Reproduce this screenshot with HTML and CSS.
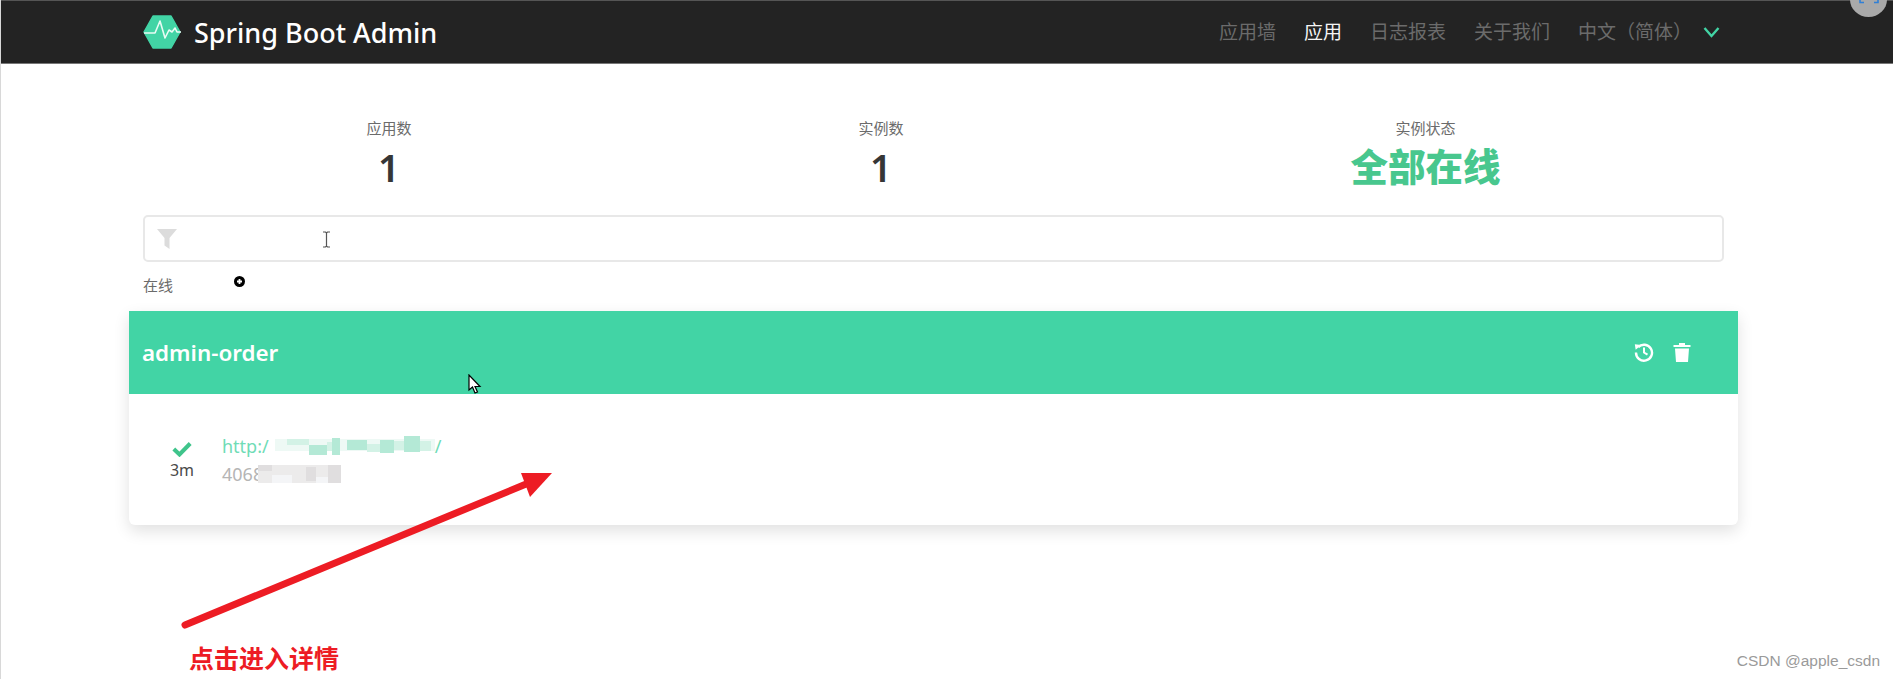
FILE: index.html
```html
<!DOCTYPE html>
<html lang="zh">
<head>
<meta charset="utf-8">
<title>Spring Boot Admin</title>
<link rel="stylesheet" href="styles.css">
</head>
<body>
<header class="navbar">
  <div class="brand">
    <svg class="logo" width="38" height="34" viewBox="0 0 38 34">
      <path d="M10 1h18l9 16-9 16H10L1 17z" fill="#42d4a5" stroke="#42d4a5" stroke-width="1.5" stroke-linejoin="round"/>
      <path d="M1 18h11l5-12 5 17 4-8 3 2 3-4 2 4h7" fill="none" stroke="#e8fbf4" stroke-width="1.6" stroke-linejoin="round"/>
    </svg>
    <span class="brand-name">Spring Boot Admin</span>
  </div>
  <nav class="nav">
    <a class="nav-item">应用墙</a>
    <a class="nav-item active">应用</a>
    <a class="nav-item">日志报表</a>
    <a class="nav-item">关于我们</a>
    <a class="nav-item">中文（简体）</a>
    <svg class="chevron" width="17" height="12" viewBox="0 0 17 12"><path d="M1.500 2l7 8 7-8" fill="none" stroke="#42d4a5" stroke-width="2.400"/></svg>
  </nav>
</header>

<main class="page">
  <section class="stats">
    <div class="stat"><div class="stat-label">应用数</div><div class="stat-value">1</div></div>
    <div class="stat"><div class="stat-label">实例数</div><div class="stat-value">1</div></div>
    <div class="stat"><div class="stat-label">实例状态</div><div class="stat-value ok">全部在线</div></div>
  </section>

  <div class="filter">
    <svg width="20" height="20" viewBox="0 0 20 20"><path d="M0 0h20l-7.500 9v11l-5-3.500V9z" fill="#dcdcdc"/></svg>
  </div>

  <div class="group-label">在线</div>

  <section class="card">
    <div class="card-head">
      <span class="app-name">admin-order</span>
      <div class="actions">
        <svg width="20" height="20" viewBox="0 0 20 20"><path d="M4.200 5.200A8 8 0 1 1 2 10.500" fill="none" stroke="#fff" stroke-width="2.400"/><path d="M0.800 2.300l6.500 .7-5.600 4.800z" fill="#fff"/><path d="M10 5.500v5l3.500 2.200" fill="none" stroke="#fff" stroke-width="2"/></svg>
        <svg width="18" height="20" viewBox="0 0 18 20"><path d="M0.500 3h17v2h-17zM6 1h6v2H6zM2 6.500h14l-1 13.500H3z" fill="#fff"/></svg>
      </div>
    </div>
    <div class="card-body">
      <div class="status">
        <svg width="20" height="16" viewBox="0 0 20 16"><path d="M1.800 8l5.700 5.500L18.200 2.500" fill="none" stroke="#3fc48b" stroke-width="4"/></svg>
        <span class="since">3m</span>
      </div>
      <div class="instance">
        <div class="url">http:/<svg class="mosaic url-mosaic" width="166" height="20" viewBox="0 0 166 20"><path fill="#eef9f5" d="M6 3h160v12H6z"/><path fill="#b4e9d6" d="M40 9h18v10H40zM63 2h8v17h-8zM78 4h20v10H78zM111 4h14v13h-14zM135 0h16v16h-16z"/><path fill="#d3f2e6" d="M18 3h22v6H18zM58 6h5v9h-5zM98 8h13v8H98zM125 5h10v9h-10zM151 5h11v10h-11z"/></svg>/</div>
        <div class="inst-id">4068<svg class="mosaic id-mosaic" width="83" height="18" viewBox="0 0 83 18"><path fill="#ecebeb" d="M0 0h83v18H0z"/><path fill="#e0dedf" d="M0 0h14v6H0zM48 2h10v14H48zM70 0h13v18H70z"/><path fill="#f4f5f7" d="M14 10h20v8H14zM58 12h12v6H58z"/></svg></div>
      </div>
    </div>
  </section>
</main>

<!-- Annotations and screen artefacts sitting on top of the page -->
<div class="corner-btn"><svg width="20" height="4" viewBox="0 0 20 4"><path d="M1 0v2.500h4M19 0v2.500h-4" fill="none" stroke="#2f7fd6" stroke-width="1.600"/></svg></div>
<svg class="arrow" width="400" height="200" viewBox="0 0 400 200">
  <path d="M4 163L350 20" stroke="#ed1c24" stroke-width="7" stroke-linecap="round" fill="none"/>
  <path d="M371 11H340L349 35z" fill="#ed1c24"/>
</svg>
<div class="note">点击进入详情</div>
<div class="watermark">CSDN @apple_csdn</div>
<svg class="cursor-text" width="9" height="17" viewBox="0 0 9 17"><path d="M1 1h2.500l1 1 1-1H8M4.500 2v13M1 16h2.500l1-1 1 1H8" fill="none" stroke="#555" stroke-width="1.200"/></svg>
<svg class="cursor-busy" width="11" height="11" viewBox="0 0 11 11"><circle cx="5.500" cy="5.500" r="5.500" fill="#000"/><path d="M5.500 3v5M3 5.500h5" stroke="#fff" stroke-width="1.800"/></svg>
<svg class="cursor-arrow" width="14" height="20" viewBox="0 0 14 20"><path d="M1 1v15l3.500-3 2.500 6 2.500-1-2.500-5.500H12z" fill="#fff" stroke="#000" stroke-width="1.200"/></svg>
</body>
</html>
```
FILE: styles.css
```css
* { box-sizing: border-box; }
html, body { margin: 0; height: 679px; overflow: hidden; }
body {
  position: relative;
  background: #fff;
  border-left: 1px solid #d8d8d8;
  font-family: "Noto Sans", "Noto Sans CJK SC", sans-serif;
  color: #4a4a4a;
}
.navbar {
  height: 64px;
  background: #232323;
  border-top: 1px solid #555;
  border-bottom: 1px solid #777;
  display: flex;
  align-items: center;
  justify-content: space-between;
  padding: 0 173px 0 142px;
}
.brand { display: flex; align-items: center; gap: 13px; }
.logo { display: block; }
.brand-name { color: #fff; font-size: 27px; font-weight: 500; line-height: 1; }
.nav { display: flex; align-items: center; gap: 28px; }
.nav-item { color: #6b6b6b; font-size: 19px; line-height: 24px; }
.nav-item.active { color: #f5f5f5; }
.chevron { margin-left: -17px; }
.page { padding: 0 155px 0 128px; }
.stats { display: flex; justify-content: space-around; padding: 54px 14px 0; height: 151px; }
.stat { text-align: center; }
.stat-label { font-size: 15px; line-height: 20px; color: #6b6b6b; }
.stat-value { font-size: 38px; line-height: 48px; margin-top: 5px; font-weight: 600; color: #363636; }
.stat-value.ok { color: #48c78e; font-weight: 900; font-size: 37.5px; }
.filter {
  margin: 0 14px;
  height: 47px;
  border: 2px solid #e8e8e8;
  border-radius: 5px;
  display: flex;
  align-items: center;
  padding-left: 12px;
}
.group-label { margin: 13px 14px 0; font-size: 15px; line-height: 20px; color: #6b6b6b; height: 36px; }
.card { border-radius: 0 0 6px 6px; box-shadow: 0 6px 16px rgba(0,0,0,.12); background: #fff; }
.card-head {
  height: 83px;
  background: #42d4a5;
  display: flex;
  align-items: center;
  justify-content: space-between;
  padding: 0 47px 0 13px;
}
.app-name { color: #fff; font-size: 22.4px; font-weight: 600; }
.actions { display: flex; align-items: center; gap: 19px; position: relative; top: -1px; }
.card-body { height: 131px; display: flex; align-items: center; padding: 0 0 0 30px; }
.status { width: 46px; display: flex; flex-direction: column; align-items: center; margin-right: 17px; margin-top: 2px; }
.since { font-size: 16px; line-height: 20px; margin-top: 3px; color: #4a4a4a; }
.instance { font-size: 18px; line-height: 28px; }
.url { color: #6fdcb6; display: flex; align-items: center; }
.inst-id { color: #b5b5b5; display: flex; align-items: center; }
.mosaic { display: block; }
.id-mosaic { margin-left: -5px; }
.corner-btn {
  position: absolute;
  left: 1849px;
  top: -18px;
  width: 37px;
  height: 35px;
  border-radius: 50%;
  background: #a9a9a9;
  display: flex;
  align-items: flex-start;
  justify-content: center;
  padding-top: 18px;
}
.corner-btn svg { display: block; }
.arrow { position: absolute; left: 180px; top: 462px; }
.note { position: absolute; left: 188px; top: 642px; color: #ed1c24; font-size: 25px; line-height: 32px; font-weight: 700; }
.watermark { position: absolute; right: 13px; top: 651px; font-family: "Liberation Sans", sans-serif; font-size: 15.5px; line-height: 20px; color: #9a9a9a; }
.cursor-text { position: absolute; left: 321px; top: 231px; }
.cursor-busy { position: absolute; left: 233px; top: 276px; }
.cursor-arrow { position: absolute; left: 467px; top: 374px; }
```
